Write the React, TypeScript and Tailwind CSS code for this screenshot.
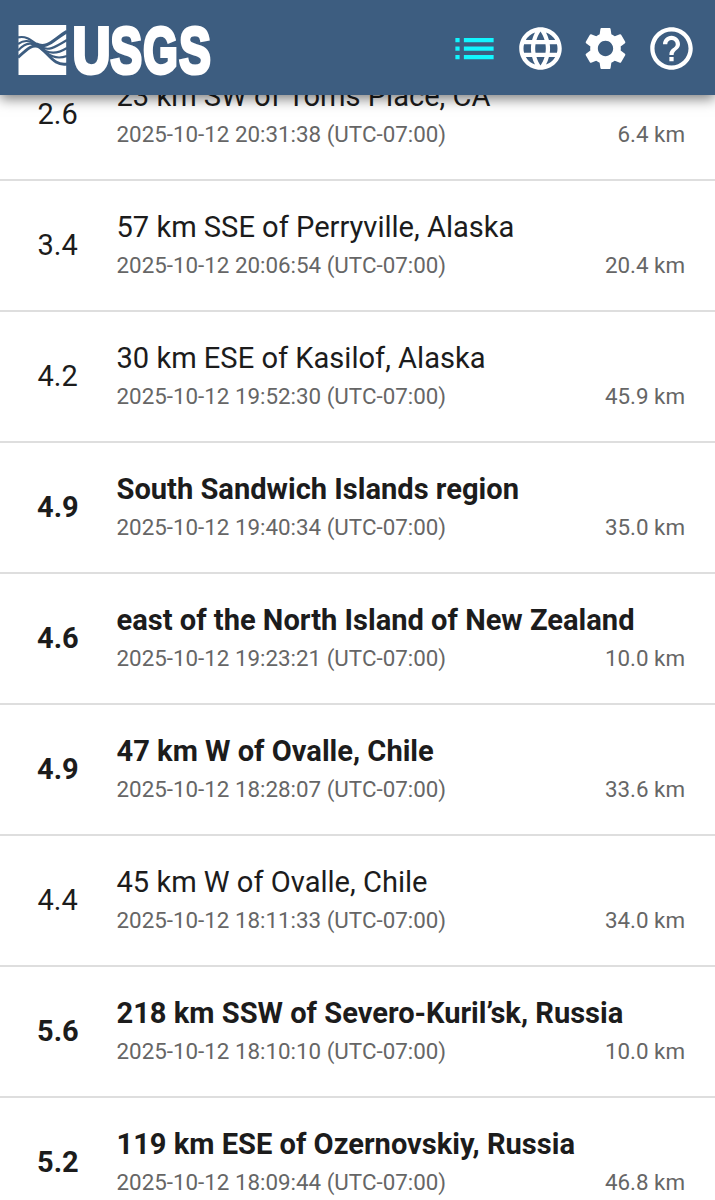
import { MdHelpOutline, MdLanguage, MdList, MdSettings } from "react-icons/md";

type Quake = { mag: string; place: string; time: string; depth: string; strong?: boolean };

const quakes: Quake[] = [
  { mag: "2.6", place: "23 km SW of Toms Place, CA", time: "20:31:38", depth: "6.4" },
  { mag: "3.4", place: "57 km SSE of Perryville, Alaska", time: "20:06:54", depth: "20.4" },
  { mag: "4.2", place: "30 km ESE of Kasilof, Alaska", time: "19:52:30", depth: "45.9" },
  { mag: "4.9", place: "South Sandwich Islands region", time: "19:40:34", depth: "35.0", strong: true },
  { mag: "4.6", place: "east of the North Island of New Zealand", time: "19:23:21", depth: "10.0", strong: true },
  { mag: "4.9", place: "47 km W of Ovalle, Chile", time: "18:28:07", depth: "33.6", strong: true },
  { mag: "4.4", place: "45 km W of Ovalle, Chile", time: "18:11:33", depth: "34.0" },
  { mag: "5.6", place: "218 km SSW of Severo-Kuril’sk, Russia", time: "18:10:10", depth: "10.0", strong: true },
  { mag: "5.2", place: "119 km ESE of Ozernovskiy, Russia", time: "18:09:44", depth: "46.8", strong: true },
];

function Logo() {
  return (
    <svg className="h-[60px] w-[200px] shrink-0" viewBox="0 0 200 60" aria-label="USGS">
      <path d="M0.5 7H48.2V57H0.5Z" fill="#fff" />
      <g fill="none" stroke="#3d5d80" strokeWidth="2.2">
        <path d="M18 26C29 32 36 21 49 13.500" strokeWidth="3.2" />
        <path d="M0 19.500C9 17 15 24 22 28.500C30 33.500 36 30 49 22" />
        <path d="M0 26C8 20 14 24 21 28.500C31 37 39 36 49 30" />
        <path d="M0 32.500C9 23 15 25 21 28.500C31 38 38 42 49 38" />
        <path d="M0 39.500C9 31 15 25 22 29.500C32 37 36 48 49 46" strokeWidth="2.9" />
      </g>
      <text
        y="54.800"
        fill="#fff"
        stroke="#fff"
        strokeWidth="4"
        className="font-['Liberation_Sans',sans-serif] text-[65.500px] font-bold"
      >
        <tspan x="54.400" textLength="38" lengthAdjust="spacingAndGlyphs">U</tspan>
        <tspan x="92.600" textLength="31.500" lengthAdjust="spacingAndGlyphs">S</tspan>
        <tspan x="125.200" textLength="34.500" lengthAdjust="spacingAndGlyphs">G</tspan>
        <tspan x="161.300" textLength="31.500" lengthAdjust="spacingAndGlyphs">S</tspan>
      </text>
    </svg>
  );
}

function Row({ mag, place, time, depth, strong }: Quake) {
  return (
    <li className="flex h-[131px] items-center border-b-2 border-[#dedede] pr-[30px] pl-[37px] text-[#1c1c1c]">
      <span className={`w-[79.500px] shrink-0 pb-[1px] text-[29px] leading-[34px] ${strong ? "font-bold" : "pl-[0.500px]"}`}>{mag}</span>
      <div className="min-w-0 flex-1">
        <div className={`text-[29.080px] leading-[40px] whitespace-nowrap ${strong ? "font-bold" : ""}`}>{place}</div>
        <div className="flex justify-between pt-[1px] pb-[1px] text-[22.360px] leading-[35px] text-[#666]">
          <span>2025-10-12 {time} (UTC-07:00)</span>
          <span>{depth} km</span>
        </div>
      </div>
    </li>
  );
}

export default function App() {
  return (
    <div className="flex h-[1200px] w-[715px] flex-col overflow-hidden bg-white font-['Roboto',sans-serif]">
      <header className="relative z-10 flex h-[95px] shrink-0 items-center justify-between bg-[#3d5d80] pt-[1px] pr-[18.500px] pl-[18px] shadow-[0_4px_12px_rgba(0,0,0,0.5)]">
        <Logo />
        <nav className="flex gap-[14.500px] text-[51px] text-white">
          <MdList className="text-[#12f6ff]" />
          <MdLanguage />
          <MdSettings />
          <MdHelpOutline />
        </nav>
      </header>
      <ul className="-mt-[45px]">
        {quakes.map((q) => (
          <Row key={q.time} {...q} />
        ))}
      </ul>
    </div>
  );
}
